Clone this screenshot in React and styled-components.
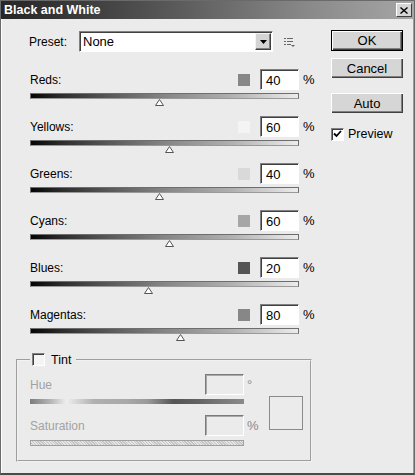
import React from "react";
import styled, { createGlobalStyle } from "styled-components";

const GlobalStyle = createGlobalStyle`
  html, body {
    margin: 0;
    padding: 0;
    background: #ebebeb;
  }
  body {
    font-family: "Liberation Sans", Arial, sans-serif;
    font-size: 12px;
    color: #000;
  }
`;

const CHANNELS = [
  { name: "Reds", value: 40, swatch: "#878787" },
  { name: "Yellows", value: 60, swatch: "#f4f4f4" },
  { name: "Greens", value: 40, swatch: "#d9d9d9" },
  { name: "Cyans", value: 60, swatch: "#a6a6a6" },
  { name: "Blues", value: 20, swatch: "#555555" },
  { name: "Magentas", value: 80, swatch: "#878787" },
];

const TRACK_W = 269;

const App = () => {
  return (
    <>
      <GlobalStyle />
      <Window>
        <TitleBar>
          <Title>Black and White</Title>
          <CloseBox>
            <svg width="8" height="7" viewBox="0 0 8 7">
              <path d="M0.5 0.5 L7.5 6.5 M7.5 0.5 L0.5 6.5" stroke="#000" strokeWidth="1.4" />
            </svg>
          </CloseBox>
        </TitleBar>
        <Content>
          <LeftCol>
            <PresetRow>
              <PresetLabel>Preset:</PresetLabel>
              <Select>
                <SelectText>None</SelectText>
                <ArrowBtn>
                  <svg width="7" height="4" viewBox="0 0 7 4">
                    <polygon points="0,0 7,0 3.5,4" fill="#000" />
                  </svg>
                </ArrowBtn>
              </Select>
              <MenuIcon>
                <svg width="11" height="11" viewBox="0 0 11 11">
                  <rect x="0" y="1" width="2" height="1" fill="#666" />
                  <rect x="3" y="1" width="6" height="1" fill="#666" />
                  <rect x="0" y="4" width="2" height="1" fill="#666" />
                  <rect x="3" y="4" width="6" height="1" fill="#666" />
                  <rect x="0" y="7" width="2" height="1" fill="#666" />
                  <rect x="3" y="7" width="4" height="1" fill="#666" />
                  <polygon points="7,8 11,8 9,10" fill="#666" />
                </svg>
              </MenuIcon>
            </PresetRow>

            <Channels>
              {CHANNELS.map((c) => (
                <ChannelRow key={c.name}>
                  <ChannelTop>
                    <ChannelLabel>{c.name}:</ChannelLabel>
                    <Swatch $color={c.swatch} />
                    <NumInput>{c.value}</NumInput>
                    <Unit>%</Unit>
                  </ChannelTop>
                  <Track>
                    <Thumb style={{ left: ((c.value + 200) / 500) * TRACK_W - 5.5 }}>
                      <svg width="9" height="7" viewBox="0 0 9 7">
                        <polygon points="4.5,0.5 8.5,6.5 0.5,6.5" fill="#fff" stroke="#555" strokeWidth="1" />
                      </svg>
                    </Thumb>
                  </Track>
                </ChannelRow>
              ))}
            </Channels>

            <TintGroup>
              <TintLegend>
                <CheckBox />
                <span>Tint</span>
              </TintLegend>
              <TintBody>
                <TintFields>
                  <TintTop>
                    <DimLabel>Hue</DimLabel>
                    <DimInput />
                    <DimUnit>°</DimUnit>
                  </TintTop>
                  <HueBar />
                  <TintTop $spaced>
                    <DimLabel>Saturation</DimLabel>
                    <DimInput />
                    <DimUnit>%</DimUnit>
                  </TintTop>
                  <SatBar />
                </TintFields>
                <PreviewSquare />
              </TintBody>
            </TintGroup>
          </LeftCol>

          <RightCol>
            <Button $primary>OK</Button>
            <Button $gap={7}>Cancel</Button>
            <Button $gap={15}>Auto</Button>
            <PreviewRow>
              <CheckBox $checked>
                <svg width="9" height="8" viewBox="0 0 9 8">
                  <path d="M1 3.5 L3.5 6 L8 1" stroke="#000" strokeWidth="1.8" fill="none" />
                </svg>
              </CheckBox>
              <span>Preview</span>
            </PreviewRow>
          </RightCol>
        </Content>
      </Window>
    </>
  );
};

export default App;

const Window = styled.div`
  width: 415px;
  height: 475px;
  box-sizing: border-box;
  display: flex;
  flex-direction: column;
  background: #ebebeb;
  border: 1px solid #6a6a6a;
  border-bottom: 2px solid #4a4a4a;
  box-shadow: inset 1px 0 0 #fff, inset -1px 0 0 #9a9a9a;
`;

const TitleBar = styled.div`
  height: 18px;
  display: flex;
  align-items: center;
  justify-content: space-between;
  padding: 0 2px 0 3px;
  background: linear-gradient(to right, #262626 0%, #3c3c3c 20%, #5e5e5e 45%, #8a8a8a 75%, #a6a6a6 100%);
`;

const Title = styled.div`
  color: #fff;
  font-weight: bold;
  font-family: "Liberation Sans", Arial, sans-serif;
  font-size: 12.5px;
`;

const CloseBox = styled.div`
  width: 14px;
  height: 12px;
  display: flex;
  align-items: center;
  justify-content: center;
  background: #d6d6d6;
  border: 1px solid;
  border-color: #fff #404040 #404040 #fff;
`;

const Content = styled.div`
  flex: 1;
  display: flex;
`;

const LeftCol = styled.div`
  width: 311px;
  box-sizing: border-box;
  padding: 12px 0 0 14px;
  display: flex;
  flex-direction: column;
`;

const PresetRow = styled.div`
  display: flex;
  align-items: center;
  height: 21px;
  margin-left: 14px;
`;

const PresetLabel = styled.div`
  width: 50px;
`;

const sunken = `
  border: 1px solid;
  border-color: #808080 #fff #fff #808080;
  box-shadow: inset 1px 1px 0 #404040;
  box-sizing: border-box;
`;

const Select = styled.div`
  ${sunken}
  width: 194px;
  height: 21px;
  background: #fff;
  display: flex;
  align-items: center;
  justify-content: space-between;
  padding: 1px 1px 1px 3px;
  font-size: 13px;
`;

const SelectText = styled.span``;

const ArrowBtn = styled.div`
  width: 16px;
  height: 17px;
  box-sizing: border-box;
  display: flex;
  align-items: center;
  justify-content: center;
  background: #d4d4d4;
  border: 1px solid;
  border-color: #f4f4f4 #404040 #404040 #f4f4f4;
  box-shadow: inset -1px -1px 0 #808080;
`;

const MenuIcon = styled.div`
  margin-left: 11px;
  display: flex;
  align-items: center;
  margin-top: 1px;
`;

const Channels = styled.div`
  margin-top: 17px;
  padding-left: 15px;
  display: flex;
  flex-direction: column;
`;

const ChannelRow = styled.div`
  width: 285px;
  display: flex;
  flex-direction: column;
  padding-bottom: 10px;
`;

const ChannelTop = styled.div`
  display: flex;
  align-items: center;
  height: 21px;
`;

const ChannelLabel = styled.div`
  flex: 1;
`;

const Swatch = styled.div`
  width: 12px;
  height: 12px;
  background: ${(p) => p.$color};
  margin-right: 10px;
`;

const NumInput = styled.div`
  ${sunken}
  width: 39px;
  height: 21px;
  background: #fff;
  padding: 3px 0 0 5px;
  font-size: 13px;
`;

const Unit = styled.div`
  margin-left: 4px;
  width: 12px;
  font-size: 13px;
`;

const Track = styled.div`
  position: relative;
  width: ${TRACK_W}px;
  height: 6px;
  box-sizing: border-box;
  margin-top: 3px;
  margin-bottom: 7px;
  border: 1px solid #6e6e6e;
  border-bottom-color: #999;
  background: linear-gradient(to right, #050505 0%, #2e2e2e 12%, #5a5a5a 30%, #858585 50%, #b0b0b0 75%, #ececec 100%);
`;

const Thumb = styled.div`
  position: absolute;
  top: 5px;
  width: 9px;
  height: 7px;
  display: flex;
`;

const TintGroup = styled.fieldset`
  margin: 2px 0 0 1px;
  width: 296px;
  box-sizing: border-box;
  padding: 8px 7px 14px 12px;
  border: 2px groove #f2f2f2;
  min-width: 0;
`;

const TintLegend = styled.legend`
  display: flex;
  align-items: center;
  gap: 6px;
  height: 13px;
  padding: 0 5px 0 2px;
  margin-left: 0;
  font-size: 12.5px;
`;

const CheckBox = styled.div`
  ${sunken}
  width: 13px;
  height: 13px;
  background: ${(p) => (p.$checked ? "#fff" : "#f4f4f4")};
  display: flex;
  align-items: center;
  justify-content: center;
`;

const TintBody = styled.div`
  display: flex;
  align-items: center;
`;

const TintFields = styled.div`
  display: flex;
  flex-direction: column;
`;

const TintTop = styled.div`
  display: flex;
  align-items: center;
  height: 21px;
  width: 229px;
  margin-top: ${(p) => (p.$spaced ? "11px" : "0")};
`;

const DimLabel = styled.div`
  flex: 1;
  color: #a2a2a2;
`;

const DimInput = styled.div`
  width: 39px;
  height: 21px;
  box-sizing: border-box;
  border: 1px solid;
  border-color: #7a7a7a #fff #fff #7a7a7a;
  box-shadow: inset 1px 1px 0 #a8a8a8;
`;

const DimUnit = styled.div`
  margin-left: 3px;
  width: 12px;
  color: #8a8a8a;
  font-size: 13px;
`;

const HueBar = styled.div`
  width: 214px;
  height: 5px;
  margin-top: 4px;
  background: linear-gradient(
    to right,
    #7c7c7c 0%,
    #b8b8b8 10%,
    #eeeeee 17%,
    #b0b0b0 30%,
    #a8a8a8 45%,
    #9a9a9a 55%,
    #555555 67%,
    #626262 78%,
    #7a7a7a 90%,
    #8a8a8a 100%
  );
`;

const SatBar = styled.div`
  width: 214px;
  height: 6px;
  box-sizing: border-box;
  margin-top: 4px;
  border: 1px solid #a0a0a0;
  background: repeating-linear-gradient(45deg, #e6e6e6 0 1px, #c4c4c4 1px 2px);
`;

const PreviewSquare = styled.div`
  width: 34px;
  height: 34px;
  box-sizing: border-box;
  border: 1px solid #8a8a8a;
  margin-left: 10px;
  margin-top: 6px;
`;

const RightCol = styled.div`
  width: 72px;
  margin-left: 19px;
  padding-top: 11px;
  display: flex;
  flex-direction: column;
`;

const Button = styled.div`
  height: ${(p) => (p.$primary ? "21px" : "20px")};
  margin-top: ${(p) => p.$gap || 0}px;
  box-sizing: border-box;
  display: flex;
  align-items: center;
  justify-content: center;
  background: #d6d6d6;
  font-size: 13px;
  border: ${(p) => (p.$primary ? "1px solid #000" : "none")};
  box-shadow: inset 1px 1px 0 #fff, inset -1px -1px 0 #404040, inset -2px -2px 0 #808080;
`;

const PreviewRow = styled.div`
  display: flex;
  align-items: center;
  gap: 4px;
  margin-top: 14px;
  font-size: 12.5px;
`;
